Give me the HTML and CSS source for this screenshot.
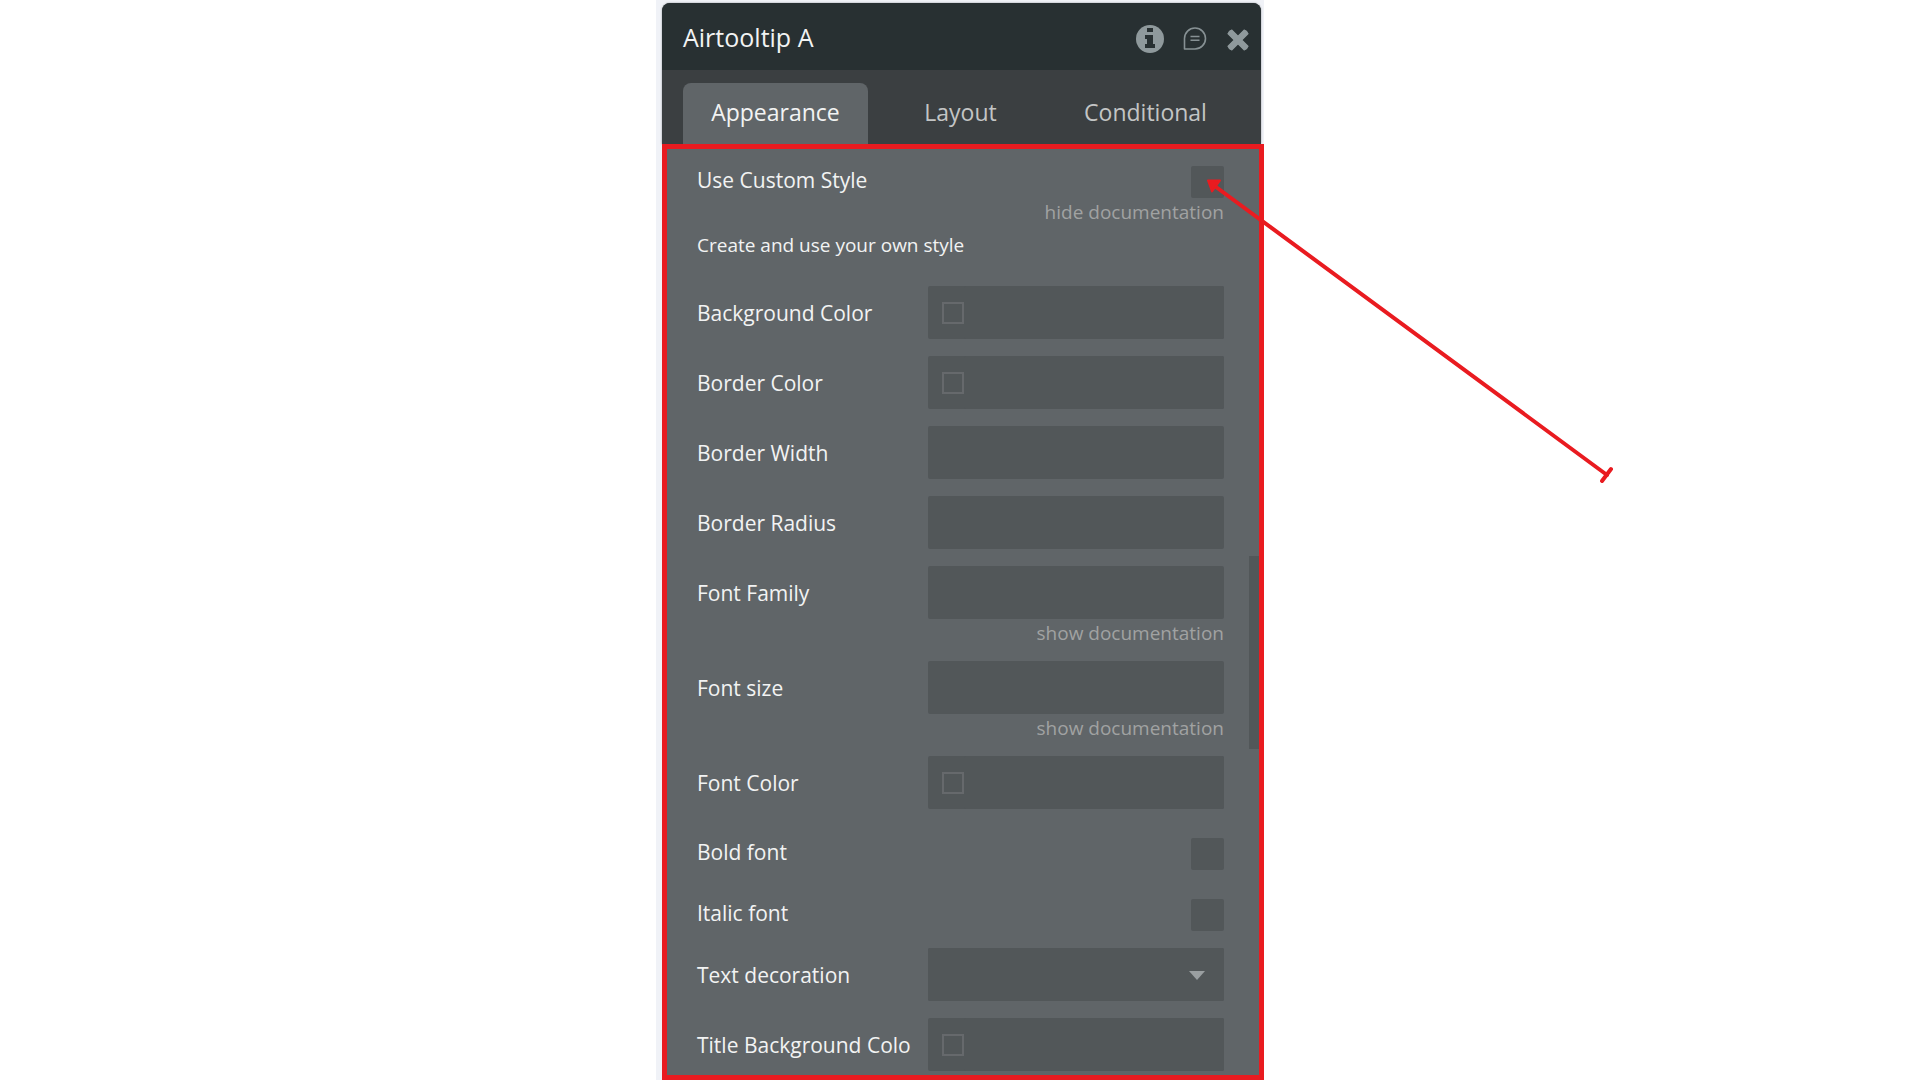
FILE: index.html
```html
<!DOCTYPE html>
<html lang="en">
<head>
  <meta charset="UTF-8">
  <title>Airtooltip A</title>
  <meta name="viewport" content="width=device-width, initial-scale=1.0">
  <link rel="stylesheet" href="styles.css">
</head>
<body>

<main class="stage">
  <section class="editor">
    <header class="editor-header">
      <h1>Airtooltip A</h1>
      <button type="button" class="icon-btn" aria-label="Info">
        <svg width="28" height="28" viewBox="1 1 28 28">
          <circle cx="15" cy="15" r="14" fill="#8f999c"/>
          <path d="M12 4h6v4h-6zM10 11h8v9h2v4H10v-4h2v-5h-2z" fill="#283032"/>
        </svg>
      </button>
      <button type="button" class="icon-btn" aria-label="Comments">
        <svg width="24" height="24" viewBox="0 0 24 24" fill="none" stroke="#879194" stroke-width="1.6">
          <path d="M1.5 22V11.500A10.500 10.500 0 1 1 12 22Z" stroke-linejoin="round"/>
          <path d="M7.500 9.500h9M7.500 13.300h9"/>
        </svg>
      </button>
      <button type="button" class="icon-btn" aria-label="Close">
        <svg width="24" height="24" viewBox="0 0 24 24" stroke="#8f999c" stroke-width="6.500" stroke-linecap="butt">
          <path d="M3.500 4.500l17 17M20.500 4.500l-17 17" stroke-linecap="butt"/>
          <path d="M5 6l14 14M19 6L5 20" stroke-linecap="round" stroke-width="5.500"/>
        </svg>
      </button>
    </header>

    <nav class="tabs">
      <button type="button" class="tab active">Appearance</button>
      <button type="button" class="tab">Layout</button>
      <button type="button" class="tab">Conditional</button>
    </nav>
  </section>

  <form class="properties">
    <div class="row row-check">
      <label for="custom_style">Use Custom Style</label>
      <input type="checkbox" id="custom_style">
    </div>
    <a href="#" class="doc-link">hide documentation</a>
    <p class="doc-text">Create and use your own style</p>

    <div class="row">
      <label for="bg_color">Background Color</label>
      <div class="color-field"><span class="swatch"></span><input type="text" id="bg_color"></div>
    </div>
    <div class="row">
      <label for="border_color">Border Color</label>
      <div class="color-field"><span class="swatch"></span><input type="text" id="border_color"></div>
    </div>
    <div class="row">
      <label for="border_width">Border Width</label>
      <input type="text" id="border_width">
    </div>
    <div class="row">
      <label for="border_radius">Border Radius</label>
      <input type="text" id="border_radius">
    </div>
    <div class="row has-doc">
      <label for="font_family">Font Family</label>
      <input type="text" id="font_family">
    </div>
    <a href="#" class="doc-link spaced">show documentation</a>
    <div class="row has-doc">
      <label for="font_size">Font size</label>
      <input type="text" id="font_size">
    </div>
    <a href="#" class="doc-link spaced">show documentation</a>
    <div class="row">
      <label for="font_color">Font Color</label>
      <div class="color-field"><span class="swatch"></span><input type="text" id="font_color"></div>
    </div>
    <div class="row row-check">
      <label for="bold_font">Bold font</label>
      <input type="checkbox" id="bold_font">
    </div>
    <div class="row row-check">
      <label for="italic_font">Italic font</label>
      <input type="checkbox" id="italic_font">
    </div>
    <div class="row">
      <label for="text_decoration">Text decoration</label>
      <div class="select-field">
        <select id="text_decoration"><option></option></select>
        <svg class="caret" width="16" height="9" viewBox="0 0 16 9"><path d="M0 0h16L8 9z" fill="#9a9fa1"/></svg>
      </div>
    </div>
    <div class="row">
      <label for="title_bg">Title Background Colo</label>
      <div class="color-field"><span class="swatch"></span><input type="text" id="title_bg"></div>
    </div>
    <div class="scroll-thumb"></div>
  </form>

  <!-- arrow pointing at the custom style box -->
  <svg class="arrow" width="420" height="320" viewBox="0 0 420 320">
    <path d="M16 16L407 304M402 310L411 298" fill="none" stroke="#e91b20" stroke-width="4" stroke-linecap="round"/>
    <path d="M8 9.500h12l-8 11z" fill="#e91b20" stroke="#e91b20" stroke-width="2" stroke-linejoin="round"/>
  </svg>
</main>

</body>
</html>
```
FILE: styles.css
```css
* { box-sizing: border-box; margin: 0; padding: 0; }
body {
  font-family: 'Open Sans', 'Noto Sans', sans-serif;
  background: #fff;
  color: #f2f3f3;
}
button, input, select {
  font: inherit;
  color: inherit;
  border: none;
}
.stage {
  position: relative;
  max-width: 608px;
  margin: 0 auto;
  padding: 3px 0 0 6px;
  background: #f0f2f7;
}
.editor {
  margin-right: 3px;
  background: #3b3f41;
  border-radius: 8px 8px 0 0;
  box-shadow: 0 0 2px #8a8f93;
}
.editor-header {
  display: flex;
  align-items: center;
  height: 67px;
  padding: 4px 11px 0 21px;
  background: #283032;
  border-radius: 8px 8px 0 0;
}
.editor-header h1 {
  flex: 1;
  padding-bottom: 4px;
  font-size: 25px;
  font-weight: 400;
  line-height: 32px;
}
.icon-btn {
  display: flex;
  background: none;
  cursor: pointer;
}
.icon-btn + .icon-btn {
  margin-left: 19px;
}
.tabs {
  display: flex;
  padding: 13px 21px 0;
}
.tab {
  width: 185px;
  height: 61px;
  padding-bottom: 4px;
  background: none;
  color: #c3c5c5;
  font-size: 23px;
  border-radius: 8px 8px 0 0;
  cursor: pointer;
}
.tab.active {
  background: #606568;
  color: #f2f3f3;
}
.properties {
  position: relative;
  padding: 5px 35px 4px 30px;
  background: #606568;
  border: 5px solid #e91b20;
  font-size: 21px;
}
.row {
  display: flex;
  align-items: center;
  justify-content: space-between;
  margin-bottom: 17px;
}
.row:nth-last-child(2) {
  margin-bottom: 0;
}
.row label {
  white-space: nowrap;
}
.row input[type="text"], .row select, .color-field, .select-field {
  width: 296px;
  height: 53px;
  background: #525759;
  border-radius: 2px;
}
.color-field {
  display: flex;
  align-items: center;
  padding-left: 14px;
}
.color-field input[type="text"] {
  flex: 1;
  min-width: 0;
  padding: 0 10px;
}
.swatch {
  width: 22px;
  height: 22px;
  border: 2px solid #66696c;
}
.row-check {
  height: 44px;
  align-items: flex-end;
}
.row-check label {
  line-height: 36px;
}
.row input[type="checkbox"] {
  appearance: none;
  width: 33px;
  height: 32px;
  background: #525759;
  border-radius: 2px;
}
.row-check:first-child, .has-doc {
  margin-bottom: 0;
}
.doc-link {
  display: block;
  padding-top: 4px;
  color: #a0a2a2;
  font-size: 19px;
  line-height: 21px;
  text-align: right;
  text-decoration: none;
}
.doc-link.spaced {
  margin-bottom: 17px;
}
.doc-text {
  font-size: 19px;
  line-height: 44px;
  margin-bottom: 19px;
}
.select-field {
  position: relative;
}
.select-field select {
  appearance: none;
  padding: 0 40px 0 14px;
}
.caret {
  position: absolute;
  right: 19px;
  top: 23px;
  pointer-events: none;
}
.scroll-thumb {
  position: absolute;
  right: 0;
  top: 407px;
  width: 10px;
  height: 193px;
  background: #525759;
}
.arrow {
  position: absolute;
  left: 544px;
  top: 171px;
  pointer-events: none;
}
```
